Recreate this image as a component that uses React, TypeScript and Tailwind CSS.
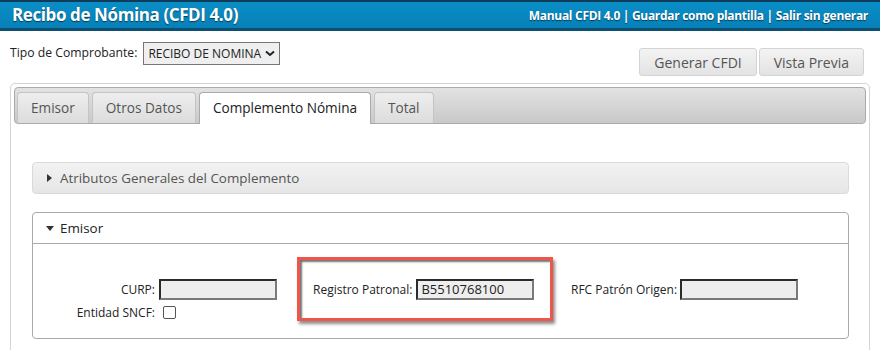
const tabs = ["Emisor", "Otros Datos", "Complemento Nómina", "Total"];

function Field({ value = "" }: { value?: string }) {
  return (
    <div className="w-[118px] h-[21px] bg-[#eeeeee] border-2 border-t-[#2b2b2b] border-l-[#2b2b2b] border-r-[#7a7a7a] border-b-[#7a7a7a] pl-[3px] text-[13px] leading-[17px] text-[#222]">
      {value}
    </div>
  );
}

export default function App() {
  return (
    <div className="w-[880px] h-[350px] overflow-hidden bg-white font-['Open_Sans',sans-serif] text-[#333]">
      {/* header bar */}
      <div className="h-[31px] border-t-2 border-t-[#0d3d5a] border-b-[3px] border-b-[#0b4f72] bg-gradient-to-b from-[#0a8ec6] to-[#0780b8] flex items-center justify-between pl-[12px] pr-[12px]">
        <h1 className="text-[17px] font-bold text-white tracking-[-0.4px] [text-shadow:0_1px_1px_rgba(0,0,0,0.55)]">
          Recibo de Nómina (CFDI 4.0)
        </h1>
        <div className="text-[12px] font-bold text-white tracking-[-0.3px] [text-shadow:0_1px_1px_rgba(0,0,0,0.55)] pt-[1px]">
          Manual CFDI 4.0 | Guardar como plantilla | Salir sin generar
        </div>
      </div>

      {/* toolbar */}
      <div className="flex justify-between pl-[10px] pr-[16px] pt-[11px] h-[52px]">
        <div className="flex items-center gap-[6px] h-[23px]">
          <span className="text-[12.2px] text-[#222]">Tipo de Comprobante:</span>
          <div className="h-[23px] w-[137px] bg-[#efefef] border border-[#767676] flex items-center justify-between px-[4px] text-[12px] text-[#222]">
            <span>RECIBO DE NOMINA</span>
            <svg width="10" height="7" viewBox="0 0 10 7">
              <path d="M1 1.5 L5 5 L9 1.5" stroke="#222" strokeWidth="2" fill="none" />
            </svg>
          </div>
        </div>
        <div className="flex gap-[2px] mt-[6px]">
          {["Generar CFDI", "Vista Previa"].map((b) => (
            <div
              key={b}
              className="h-[28px] px-[14px] flex items-center rounded-[3px] border border-[#d3d3d3] bg-gradient-to-b from-[#f3f3f3] to-[#e3e3e3] text-[14px] text-[#555]"
            >
              {b}
            </div>
          ))}
        </div>
      </div>

      {/* tabs widget */}
      <div className="mx-[10px] border border-[#d4d4d4] rounded-[5px] p-[3px] h-[300px]">
        <div className="h-[37px] border border-[#aaaaaa] rounded-[4px] bg-gradient-to-b from-[#e2e2e2] to-[#c9c9c9] flex items-end gap-[3px] pl-[2px]">
          {tabs.map((t) => {
            const active = t === "Complemento Nómina";
            return (
              <div
                key={t}
                className={
                  active
                    ? "h-[32px] mb-[-1px] px-[13px] flex items-center rounded-t-[4px] border border-b-0 border-[#aaaaaa] bg-white text-[13.6px] text-[#222]"
                    : "h-[31px] px-[13px] flex items-center rounded-t-[4px] border border-b-0 border-[#c4c4c4] bg-gradient-to-b from-[#eeeeee] to-[#dcdcdc] text-[13.6px] text-[#555]"
                }
              >
                {t}
              </div>
            );
          })}
        </div>

        <div className="pl-[18px] pr-[17px] pt-[38px] flex flex-col gap-[18px]">
          {/* collapsed section */}
          <div className="h-[32px] rounded-[4px] border border-[#dadada] bg-gradient-to-b from-[#f2f2f2] to-[#e6e6e6] flex items-center pl-[14px] gap-[8px] text-[13.4px] text-[#555]">
            <span className="w-0 h-0 border-y-[4px] border-y-transparent border-l-[5px] border-l-[#333]" />
            Atributos Generales del Complemento
          </div>

          {/* open section */}
          <div className="h-[127px] rounded-[4px] border border-[#aaaaaa]">
            <div className="h-[31px] border-b border-[#aaaaaa] flex items-center pl-[13px] gap-[6px] text-[13.4px] text-[#222]">
              <span className="w-0 h-0 border-x-[4px] border-x-transparent border-t-[5px] border-t-[#333]" />
              Emisor
            </div>
            <div className="flex items-start">
              <div className="pt-[35px] flex flex-col gap-[6px]">
                <div className="flex items-center gap-[4px]">
                  <span className="w-[122px] text-right text-[12px] text-[#222]">CURP:</span>
                  <Field />
                </div>
                <div className="flex items-center gap-[4px] h-[13px]">
                  <span className="w-[122px] text-right text-[12px] text-[#222]">Entidad SNCF:</span>
                  <span className="ml-[4px] w-[13px] h-[13px] rounded-[2px] border border-[#555] bg-white" />
                </div>
              </div>

              <div className="ml-[20px] mt-[13px] w-[256px] h-[64px] border-[3px] border-[#f0554b] shadow-[2px_3px_3px_rgba(0,0,0,0.45),inset_2px_2px_2px_rgba(0,0,0,0.55)] flex items-start pl-[13px] pt-[19px] gap-[4px]">
                <span className="text-[12px] text-[#222] leading-[21px]">Registro Patronal:</span>
                <Field value="B5510768100" />
              </div>

              <div className="ml-[18px] pt-[35px] flex items-center gap-[3px]">
                <span className="text-[12px] text-[#222]">RFC Patrón Origen:</span>
                <Field />
              </div>
            </div>
          </div>
        </div>
      </div>
    </div>
  );
}
